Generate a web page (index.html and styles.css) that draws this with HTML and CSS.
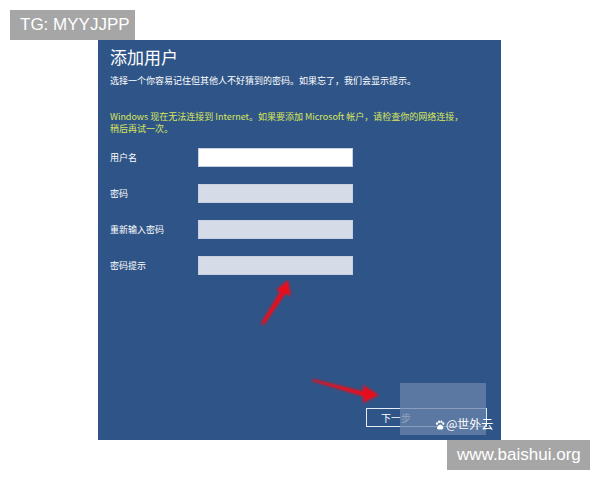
FILE: index.html
```html
<!DOCTYPE html>
<html lang="zh-CN">
<head>
  <meta charset="UTF-8" />
  <title>添加用户</title>
  <link rel="stylesheet" href="styles.css">
</head>
<body>

  <div class="tag tag-top">TG: MYYJJPP</div>

  <div class="shot">
    <div class="dialog">
      <h1>添加用户</h1>
      <p class="lead">选择一个你容易记住但其他人不好猜到的密码。如果忘了，我们会显示提示。</p>

      <p class="warn">Windows 现在无法连接到 Internet。如果要添加 Microsoft 帐户，请检查你的网络连接，<br>稍后再试一次。</p>

      <div class="form">
        <label>用户名</label>
        <div class="field active"></div>
        <label>密码</label>
        <div class="field"></div>
        <label>重新输入密码</label>
        <div class="field"></div>
        <label>密码提示</label>
        <div class="field"></div>
      </div>

      <div class="actions">
        <div class="btn">下一步</div>
      </div>
    </div>

    <!-- red arrows drawn over the screenshot -->
    <svg class="arrows" width="403" height="400" viewBox="0 0 403 400">
      <defs>
        <filter id="soft" x="-20%" y="-20%" width="140%" height="140%">
          <feGaussianBlur stdDeviation="1.2"/>
        </filter>
      </defs>
      <g fill="#e8101a" filter="url(#soft)">
        <polygon points="163,283 183,250 188,253 166,285"/>
        <polygon points="178,250 190,240 193,256"/>
        <polygon points="215,339 268,352 267,357 214,341"/>
        <polygon points="265,345 281,355 265,363"/>
      </g>
    </svg>

    <div class="stamp">
      <svg class="paw" width="10" height="10" viewBox="0 0 10 10">
        <g fill="#ffffff">
          <ellipse cx="2" cy="3.6" rx="1.1" ry="1.4"/>
          <ellipse cx="4" cy="1.8" rx="1.1" ry="1.4"/>
          <ellipse cx="6.4" cy="1.8" rx="1.1" ry="1.4"/>
          <ellipse cx="8.3" cy="3.6" rx="1.1" ry="1.4"/>
          <path d="M5.2 4.6c1.6 0 3.2 2.3 3.2 3.6 0 1.2-1.4 1.3-3.2 1.3s-3.2-.1-3.2-1.3c0-1.3 1.6-3.6 3.2-3.6z"/>
        </g>
      </svg>@世外云
    </div>
  </div>

  <div class="tag tag-bottom">www.baishui.org</div>

</body>
</html>
```

FILE: styles.css
```css
/* ---------------- PAGE ---------------- */
body {
  margin: 0;
  width: 600px;
  height: 480px;
  background: #ffffff;
  position: relative;
  overflow: hidden;
  font-family: "Noto Sans CJK SC", "Noto Sans", sans-serif;
}

/* grey watermark labels */
.tag {
  position: absolute;
  background: #a6a6a6;
  color: #ffffff;
  font-family: "Liberation Sans", Arial, sans-serif;
  font-size: 17px;
  line-height: 30px;
  box-sizing: border-box;
}

.tag-top {
  top: 10px;
  left: 10px;
  width: 125px;
  padding-left: 10px;
}

.tag-bottom {
  top: 440px;
  left: 447px;
  width: 143px;
  padding-left: 10px;
}

/* ---------------- DIALOG ---------------- */
.shot {
  position: relative;
  margin: 40px 0 0 98px;
  width: 403px;
  height: 400px;
  background: #2f5588;
}

.dialog {
  padding: 5px 0 0 12px;
  color: #ffffff;
}

h1 {
  margin: 0;
  font-size: 17px;
  font-weight: normal;
  line-height: 24px;
}

.lead {
  margin: 6px 0 0;
  font-size: 9px;
  line-height: 12px;
}

.warn {
  margin: 24px 0 0;
  font-size: 9px;
  line-height: 12px;
  color: #d9e65a;
}

.form {
  display: grid;
  grid-template-columns: 88px 155px;
  row-gap: 17px;
  align-items: center;
  margin-top: 13px;
}

.form label {
  font-size: 9px;
  line-height: 19px;
}

.field {
  height: 19px;
  background: #d6dbe8;
  box-shadow: inset 0 0 0 1px #c8cfe0;
}

.field.active {
  background: #ffffff;
}

.actions {
  display: flex;
  justify-content: flex-end;
  margin: 133px 14px 0 0;
}

.btn {
  width: 105px;
  height: 17px;
  border: 1px solid #e6ecf5;
  font-size: 10px;
  line-height: 17px;
  padding-left: 14px;
  box-sizing: content-box;
}

/* ---------------- OVERLAYS ---------------- */
.arrows {
  position: absolute;
  top: 0;
  left: 0;
  pointer-events: none;
}

.stamp {
  position: absolute;
  left: 302px;
  top: 343px;
  width: 86px;
  height: 52px;
  background: rgba(105, 132, 170, 0.75);
  color: #ffffff;
  font-size: 12px;
  line-height: 14px;
  box-sizing: border-box;
  padding: 34px 0 0 35px;
  white-space: nowrap;
}

.paw {
  margin-right: 1px;
  vertical-align: -1px;
}
```
